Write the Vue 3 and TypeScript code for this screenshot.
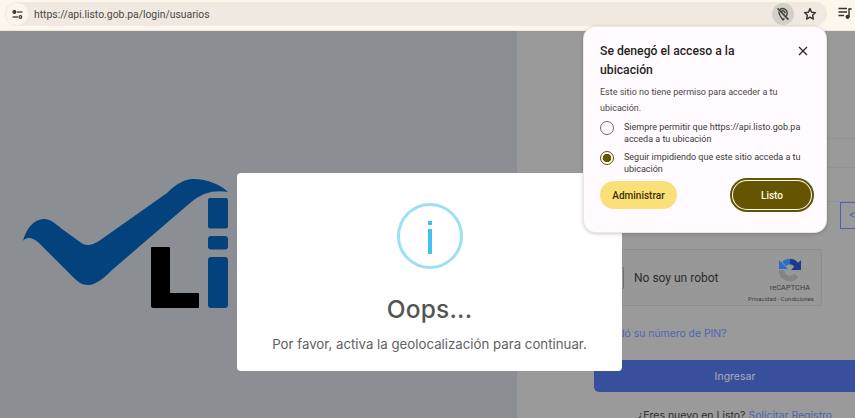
<script setup lang="ts">
import { ref } from 'vue'

interface LocationOption {
  id: string
  label: string
}

const options: LocationOption[] = [
  { id: 'allow', label: 'Siempre permitir que https://api.listo.gob.pa acceda a tu ubicación' },
  { id: 'block', label: 'Seguir impidiendo que este sitio acceda a tu ubicación' }
]
const selected = ref('block')
</script>

<template>
  <div class="page">
    <header class="toolbar">
      <div class="omnibox">
        <span class="tune">
          <svg width="11" height="9" viewBox="0 0 11 9" fill="none" stroke="#3c3a36" stroke-width="1.3">
            <circle cx="2.4" cy="2" r="1.4" fill="#3c3a36" />
            <path d="M5 2H10.5" />
            <circle cx="8.4" cy="7" r="1.3" />
            <path d="M0.5 7H6" />
          </svg>
        </span>
        <span class="url">https://api.listo.gob.pa/login/usuarios</span>
        <span class="geo">
          <svg width="14" height="14" viewBox="0 0 14 14" fill="none" stroke="#45433f" stroke-width="1.4">
            <path d="M4 2.6A4.4 4.4 0 0 1 11.2 6.2C11.2 7.6 10.6 8.9 9.8 10.1" />
            <path d="M2.9 4.6C2.7 7.2 5 10.4 7 12.8L8.4 11.2" />
            <path d="M5.4 4.6A2 2 0 0 1 8.8 6.6" />
            <path d="M1.6 1.4L12.4 12.6" stroke-width="1.6" />
          </svg>
        </span>
        <span class="star">
          <svg width="14" height="14" viewBox="0 0 14 14" fill="none" stroke="#35332f" stroke-width="1.4" stroke-linejoin="round">
            <path d="M7 1.6L8.6 5.2L12.5 5.6L9.6 8.2L10.4 12.1L7 10.1L3.6 12.1L4.4 8.2L1.5 5.6L5.4 5.2Z" />
          </svg>
        </span>
      </div>
      <span class="media">
        <svg width="14" height="12" viewBox="0 0 14 12" fill="none" stroke="#35332f" stroke-width="1.4">
          <path d="M0.5 1.5H9M0.5 5H9M0.5 8.5H6" />
          <path d="M11 10V2H13.6" />
          <circle cx="9.6" cy="9.8" r="1.4" fill="#35332f" />
        </svg>
      </span>
    </header>

    <main class="content">
      <section class="brand">
        <svg class="logo" width="205" height="130" viewBox="23 179 205 130">
          <path
            fill="#03427c"
            d="M23 241C26 229 34 219 44 219C50 219 55 223 62 229L80 242C85 246 91 246 99 241L167 193C176 184 185 179 193 179C208 179 221 185 228 192C215 190 203 192 190 203L112 270C104 278 96 285 88 285C82 285 78 282 73 277L39 243C33 238 27 236 23 241Z"
          />
          <path fill="#000" d="M151 248Q151 247 152 247H169Q170 247 170 248V293H198Q199 293 199 294V307Q199 308 198 308H153Q151 308 151 306Z" />
          <rect x="208" y="198" width="20" height="30.5" rx="2" fill="#03427c" />
          <rect x="208" y="236" width="20" height="13.5" rx="3" fill="#03427c" />
          <rect x="208" y="257" width="20" height="51" rx="3" fill="#03427c" />
        </svg>
      </section>

      <section class="login">
        <div class="field"></div>
        <div class="pin-row">
          <span class="pin-toggle">&lt;</span>
        </div>
        <div class="captcha">
          <span class="check"></span>
          <span class="robot">No soy un robot</span>
          <div class="badge">
            <svg class="badge-logo" width="24" height="24" viewBox="0 0 24 24" fill="none" stroke-width="5.5">
              <path stroke="#858585" d="M3.5 12A8.5 8.5 0 0 0 18.5 17.5" />
              <path stroke="#2f6cc4" d="M12 3.5A8.5 8.5 0 0 0 6 6" />
              <path stroke="#1a3a8e" d="M12 3.5A8.5 8.5 0 0 1 19 8" />
              <path fill="#2f6cc4" stroke="none" d="M1 11V2L10 11Z" />
              <path fill="#1a3a8e" stroke="none" d="M23 2V12H13Z" />
            </svg>
            <span class="badge-name">reCAPTCHA</span>
            <span class="badge-links">Privacidad - Condiciones</span>
          </div>
        </div>
        <a class="pin-link">¿Olvidó su número de PIN?</a>
        <button class="submit" type="button">Ingresar</button>
        <p class="signup">¿Eres nuevo en Listo? <a>Solicitar Registro</a></p>
      </section>
    </main>

    <div class="modal">
      <div class="ring"><span class="dot"></span><span class="stem"></span></div>
      <h2 class="modal-title">Oops...</h2>
      <p class="modal-text">Por favor, activa la geolocalización para continuar.</p>
    </div>

    <aside class="bubble">
      <div class="bubble-head">
        <h3>Se denegó el acceso a la ubicación</h3>
        <svg class="close" width="10" height="10" viewBox="0 0 10 10" stroke="#2f2d2a" stroke-width="1.4">
          <path d="M1 1L9 9M9 1L1 9" />
        </svg>
      </div>
      <p class="bubble-text">Este sitio no tiene permiso para acceder a tu ubicación.</p>
      <label v-for="opt in options" :key="opt.id" class="option" @click="selected = opt.id">
        <span class="radio" :class="{ on: selected === opt.id }"></span>
        <span>{{ opt.label }}</span>
      </label>
      <div class="actions">
        <button class="manage" type="button">Administrar</button>
        <button class="done" type="button">Listo</button>
      </div>
    </aside>
  </div>
</template>

<style scoped>
.page {
  position: relative;
  width: 855px;
  height: 418px;
  overflow: hidden;
  display: flex;
  flex-direction: column;
  font-family: Roboto, sans-serif;
}

.toolbar {
  height: 31px;
  flex: none;
  display: flex;
  align-items: flex-start;
  box-sizing: border-box;
  padding: 2px 0 0 5px;
  background: #fdf6ea;
  border-bottom: 1px solid #efe8da;
}

.omnibox {
  width: 822px;
  height: 24px;
  display: flex;
  align-items: center;
  border-radius: 12px;
  background: #efe9e1;
}

.tune {
  width: 22px;
  height: 22px;
  margin-left: 1px;
  display: flex;
  align-items: center;
  justify-content: center;
  border-radius: 50%;
  background: #fbf5eb;
}

.url {
  margin-left: 6px;
  font-size: 10.4px;
  color: #4a4844;
  flex: 1;
}

.geo {
  width: 22px;
  height: 22px;
  display: flex;
  align-items: center;
  justify-content: center;
  border-radius: 50%;
  background: #d3cfc9;
}

.star {
  width: 14px;
  height: 14px;
  margin: 0 10px 0 9px;
  display: flex;
}

.media {
  margin: 5px 0 0 11px;
  display: flex;
}

.content {
  flex: 1;
  display: flex;
  min-height: 0;
}

.brand {
  width: 517px;
  flex: none;
  box-sizing: border-box;
  padding: 148px 0 0 23px;
  background: #8b8e93;
}

.logo {
  display: block;
}

.login {
  flex: 1;
  box-sizing: border-box;
  padding: 107px 0 0 77px;
  background: #9a9a9a;
  overflow: hidden;
}

.login > * {
  width: 282px;
}

.field {
  height: 28px;
  border-top: 1px solid #8d92a0;
  border-bottom: 1px solid #8d92a0;
}

.pin-row {
  height: 29px;
  margin-top: 33px;
  display: flex;
  justify-content: flex-end;
  border-top: 1px solid #8d92a0;
}

.pin-toggle {
  width: 36px;
  height: 27px;
  display: block;
  box-sizing: border-box;
  border: 1px solid #4b62ad;
  padding-left: 8px;
  font-size: 12px;
  line-height: 25px;
  color: #4b62ad;
}

.captcha {
  box-sizing: border-box;
  width: 228px !important;
  height: 57px;
  margin-top: 18px;
  display: flex;
  align-items: center;
  padding-left: 7px;
  border: 1px solid #8e8e8e;
  border-radius: 3px;
  background: #989898;
}

.check {
  width: 22px;
  height: 22px;
  flex: none;
  box-sizing: border-box;
  border: 1px solid #6f6f6f;
  border-radius: 2px;
}

.robot {
  margin-left: 10px;
  font-size: 12px;
  color: #2c2c2c;
}

.badge {
  margin-left: auto;
  width: 74px;
  margin-right: 3px;
  display: flex;
  flex-direction: column;
  align-items: center;
  color: #3d3d3d;
  padding-top: 5px;
}

.badge-logo {
  margin-left: 18px;
}

.badge-name {
  font-size: 7.5px;
  line-height: 10px;
  margin: 1px 0 0 18px;
}

.badge-links {
  font-size: 6px;
  line-height: 9px;
  margin-top: 1px;
  white-space: nowrap;
}

.pin-link {
  display: block;
  margin-top: 19px;
  font-family: Inter, sans-serif;
  font-size: 10.4px;
  line-height: 18px;
  color: #4e66b4;
}

.submit {
  display: block;
  height: 32px;
  margin-top: 17px;
  padding: 0;
  border: none;
  border-radius: 5px;
  background: #38509b;
  color: #a9acb8;
  font-family: Inter, sans-serif;
  font-size: 10.5px;
}

.signup {
  margin: 15px 0 0;
  text-align: center;
  font-family: Inter, sans-serif;
  font-size: 10.5px;
  line-height: 18px;
  color: #2e2e2e;
  white-space: nowrap;
}

.signup a {
  color: #4e66b4;
}

.modal {
  position: absolute;
  left: 237px;
  top: 173px;
  width: 385px;
  height: 198px;
  box-sizing: border-box;
  padding-top: 30px;
  display: flex;
  flex-direction: column;
  align-items: center;
  border-radius: 4px;
  background: #fff;
  font-family: Inter, sans-serif;
}

.ring {
  width: 66px;
  height: 66px;
  box-sizing: border-box;
  display: flex;
  flex-direction: column;
  align-items: center;
  padding-top: 15px;
  border: 3px solid #9de0f6;
  border-radius: 50%;
}

.dot {
  width: 4px;
  height: 4px;
  background: #3fc3ee;
}

.stem {
  width: 4px;
  height: 25px;
  margin-top: 4px;
  background: #3fc3ee;
}

.modal-title {
  margin: 25px 0 0;
  font-size: 24.5px;
  line-height: 30px;
  font-weight: 500;
  letter-spacing: 0.2px;
  color: #545454;
}

.modal-text {
  margin: 10px 0 0;
  font-size: 13.25px;
  line-height: 20px;
  color: #616161;
  white-space: nowrap;
}

.bubble {
  position: absolute;
  left: 584px;
  top: 27px;
  width: 242px;
  height: 205px;
  box-sizing: border-box;
  padding: 15px 15px 0 16px;
  border-radius: 12px;
  background: #fffbfe;
  box-shadow: 0 0 0 1px #efe9dc, 0 1px 4px rgba(0, 0, 0, 0.3);
  color: #3b3a38;
}

.bubble-head {
  display: flex;
  justify-content: space-between;
  align-items: flex-start;
}

.bubble-head h3 {
  margin: 0;
  width: 180px;
  font-size: 12.2px;
  line-height: 19px;
  font-weight: 500;
  color: #262523;
}

.close {
  margin: 4px 3px 0 0;
  flex: none;
}

.bubble-text {
  margin: 4px 0 5px;
  font-size: 9px;
  line-height: 16px;
  color: #4a4846;
}

.option {
  display: flex;
  align-items: flex-start;
  gap: 10px;
  min-height: 24px;
  margin-bottom: 6px;
  font-size: 9px;
  line-height: 12px;
}

.radio {
  width: 14px;
  height: 14px;
  flex: none;
  box-sizing: border-box;
  border: 1.5px solid #6e6a62;
  border-radius: 50%;
}

.radio.on {
  border-color: #655400;
  background: radial-gradient(circle, #655400 0 4px, transparent 4.5px);
}

.actions {
  margin-top: 6px;
  display: flex;
  justify-content: space-between;
}

.actions button {
  height: 28px;
  padding: 0;
  border: none;
  border-radius: 14px;
  font-family: Roboto, sans-serif;
  font-size: 10px;
  font-weight: 500;
}

.manage {
  width: 77px;
  background: #fbe07a;
  color: #3a3100;
}

.done {
  width: 78px;
  background: #655400;
  color: #fffbe8;
  outline: 2px solid #655400;
  outline-offset: 1px;
}
</style>

<style>
html,
body {
  margin: 0;
  background: #8b8e93;
}
</style>
